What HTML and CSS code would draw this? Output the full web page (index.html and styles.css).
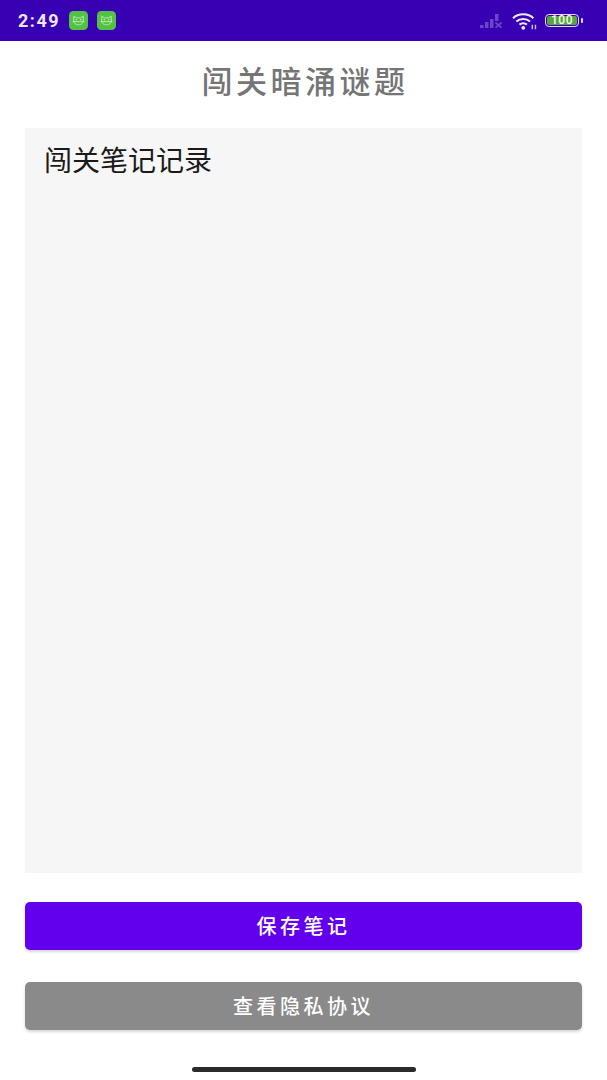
FILE: index.html
```html
<!DOCTYPE html>
<html lang="zh">
    <head>
        <meta charset="utf-8">
        <title>闯关暗涌谜题</title>
        <link rel="stylesheet" href="styles.css">
    </head>
    <body>
        <div class="status-bar">
            <span class="time">2:49</span>
            <svg class="app-icon" viewBox="0 0 20 20">
                <rect width="20" height="20" rx="4.5" fill="#53c243"/>
                <path d="M5 9.500V5.500l2.800 1.700h4.400L15 5.500v4c.5 3-2 5-5 5s-5.500-2-5-5zM3.800 11.200h12.400" fill="none" stroke="#c9efc2" stroke-width=".9"/>
                <circle cx="7.800" cy="9.300" r=".8" fill="#c9efc2"/>
                <circle cx="12.200" cy="9.300" r=".8" fill="#c9efc2"/>
            </svg>
            <svg class="app-icon" viewBox="0 0 20 20">
                <rect width="20" height="20" rx="4.500" fill="#53c243"/>
                <path d="M5 9.500V5.500l2.800 1.700h4.400L15 5.500v4c.5 3-2 5-5 5s-5.500-2-5-5zM3.800 11.200h12.400" fill="none" stroke="#c9efc2" stroke-width=".9"/>
                <circle cx="7.800" cy="9.300" r=".8" fill="#c9efc2"/>
                <circle cx="12.200" cy="9.300" r=".8" fill="#c9efc2"/>
            </svg>
            <div class="status-right">
                <svg class="signal" viewBox="0 0 24 14">
                    <rect x="0" y="11" width="3.500" height="3" fill="#6a45c8"/>
                    <rect x="5" y="8" width="3.500" height="6" fill="#6a45c8"/>
                    <rect x="10" y="5" width="3.500" height="9" fill="#6a45c8"/>
                    <rect x="15" y="0" width="3.500" height="7" fill="#6a45c8"/>
                    <path d="M15.500 8.500l6 5.500M21.500 8.500l-6 5.500" stroke="#6a45c8" stroke-width="1.700"/>
                </svg>
                <svg class="wifi" viewBox="0 0 24 17">
                    <path d="M1 5.800C6 .8 15.500 .8 20.500 5.800M4.200 9c3.500-3.200 9.600-3.200 13.100 0M7.200 12c2-1.700 5.100-1.700 7.100 0" fill="none" stroke="#f1e9ff" stroke-width="2"/>
                    <circle cx="10.800" cy="15" r="1.800" fill="#f1e9ff"/>
                    <path d="M19.500 12v4.500M22.500 12v4.500" stroke="#cbb8f2" stroke-width="1.400"/>
                </svg>
                <div class="battery">
                    <div class="battery-body"><span class="battery-level">100</span></div>
                    <div class="battery-tip"></div>
                </div>
            </div>
        </div>

        <h1 class="title">闯关暗涌谜题</h1>

        <div class="notes">闯关笔记记录</div>

        <div class="btn btn-save">保存笔记</div>
        <div class="btn btn-privacy">查看隐私协议</div>

        <div class="home-bar"></div>
    </body>
</html>
```

FILE: styles.css
```css
html, body {
    height: 100%;
}
body {
    margin: 0;
    display: flex;
    flex-direction: column;
    background-color: #fff;
    font-family: "Roboto", "Noto Sans CJK SC", sans-serif;
}

.status-bar {
    height: 41px;
    flex-shrink: 0;
    display: flex;
    align-items: center;
    padding: 0 24px 0 18px;
    background-color: #3700b3;
}
.time {
    width: 51px;
    color: #efe6ff;
    font-size: 18px;
    font-weight: 700;
    letter-spacing: 1.500px;
}
.app-icon {
    width: 19px;
    height: 19px;
    margin-right: 9px;
}
.status-right {
    margin-left: auto;
    display: flex;
    align-items: center;
}
.signal {
    width: 24px;
    height: 14px;
    margin-right: 8px;
}
.wifi {
    width: 25px;
    height: 18px;
    margin-right: 8px;
}
.battery {
    display: flex;
    align-items: center;
}
.battery-body {
    width: 30px;
    height: 9px;
    padding: 1px;
    border: 1.500px solid #e6d9ff;
    border-radius: 4px;
    display: flex;
}
.battery-level {
    flex: 1;
    background-color: #5aa53f;
    border-radius: 2px;
    color: #f3fff0;
    font-size: 12px;
    font-weight: 500;
    line-height: 9px;
    text-align: center;
    letter-spacing: 0.5px;
}
.battery-tip {
    width: 2px;
    height: 5px;
    margin-left: 2px;
    background-color: #e6d9ff;
    border-radius: 1px;
}

.title {
    margin: 24px 0 28px;
    padding-left: 3px;
    color: #757575;
    font-size: 31px;
    font-weight: 500;
    letter-spacing: 3.500px;
    line-height: 35px;
    text-align: center;
}

.notes {
    height: 745px;
    flex-shrink: 0;
    margin: 0 25px;
    padding: 17px 19px;
    box-sizing: border-box;
    background-color: #f6f6f6;
    color: #1a1a1a;
    font-size: 28px;
    line-height: 33px;
}

.btn {
    height: 46px;
    flex-shrink: 0;
    margin: 29px 25px 0;
    padding-top: 2px;
    border-radius: 5px;
    color: #fff;
    font-size: 20px;
    font-weight: 500;
    letter-spacing: 3.500px;
    line-height: 46px;
    text-align: center;
    box-shadow: 0 2px 3px rgba(0, 0, 0, 0.16);
}
.btn-save {
    background-color: #6200ee;
}
.btn-privacy {
    margin-top: 32px;
    background-color: #8a8a8a;
}

.home-bar {
    width: 224px;
    height: 5px;
    margin: 37px auto 0;
    border-radius: 3px;
    background-color: #2b2b2b;
}
```
